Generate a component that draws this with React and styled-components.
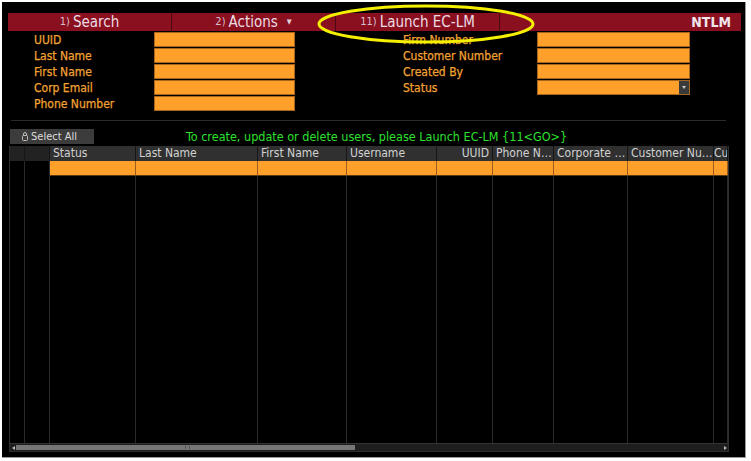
import React from 'react';
import styled, { createGlobalStyle } from 'styled-components';

const GlobalStyle = createGlobalStyle`
  html, body {
    margin: 0;
    padding: 0;
    background: #ffffff;
  }
  body {
    font-family: "DejaVu Sans Condensed", "Liberation Sans Narrow", "Liberation Sans", sans-serif;
  }
`;

const Screen = styled.div`
  position: relative;
  box-sizing: border-box;
  width: 744px;
  height: 456px;
  margin: 2px 0 0 2px;
  background: #000;
  border-right: 1px solid #9a9a9a;
  border-bottom: 1px solid #9a9a9a;
  padding: 11px 4px 0 6px;
  display: flex;
  flex-direction: column;
`;

const MenuBar = styled.div`
  display: flex;
  height: 18px;
  background: #8a1020;
`;

const Tab = styled.div`
  box-sizing: border-box;
  width: 164px;
  border-right: 1px solid #4a0810;
  display: flex;
  align-items: center;
  justify-content: center;
  gap: 3px;
  color: #ecdde4;
  font-size: 15px;
  line-height: 18px;
`;

const TabNum = styled.span`
  font-size: 11px;
  color: #d9bfcc;
`;

const Caret = styled.span`
  font-size: 7px;
  margin-left: 6px;
  color: #e5cfd8;
`;

const Code = styled.div`
  flex: 1;
  text-align: right;
  padding-right: 10px;
  color: #f0e6ec;
  font-size: 14px;
  font-weight: bold;
  line-height: 18px;
`;

const Highlight = styled.svg`
  position: absolute;
  left: 313px;
  top: 1px;
  pointer-events: none;
`;

const Form = styled.div`
  display: flex;
  padding: 1px 0 0 26px;
  height: 88px;
`;

const FieldGroup = styled.div`
  display: grid;
  grid-template-columns: ${p => p.$labelWidth}px ${p => p.$inputWidth}px;
  grid-auto-rows: 16px;
  margin-right: ${p => p.$gap || 0}px;
`;

const Label = styled.div`
  color: #f2a233;
  font-size: 12px;
  line-height: 15px;
  padding-top: 1px;
  -webkit-text-stroke: 0.25px #f2a233;
`;

const Input = styled.div`
  position: relative;
  box-sizing: border-box;
  height: 15px;
  background: #ffa02a;
  border: 1px solid #a8661c;
`;

const DropButton = styled.div`
  position: absolute;
  right: 0;
  top: 0;
  bottom: 0;
  width: 10px;
  background: #3a3a3a;
  display: flex;
  align-items: center;
  justify-content: center;
  &::after {
    content: '';
    border-left: 2px solid transparent;
    border-right: 2px solid transparent;
    border-top: 3px solid #c8c8c8;
  }
`;

const Rule = styled.div`
  height: 1px;
  background: #2a2a2a;
  margin: 0 15px 0 3px;
`;

const Toolbar = styled.div`
  display: flex;
  align-items: center;
  height: 15px;
  margin: 8px 0 1px 2px;
`;

const SelectButton = styled.div`
  width: 84px;
  height: 15px;
  box-sizing: border-box;
  background: #3c3c3c;
  color: #dcdcdc;
  font-size: 11px;
  display: flex;
  align-items: center;
  padding-left: 12px;
  gap: 3px;
`;

const Message = styled.div`
  margin-left: 92px;
  color: #2ee02e;
  font-size: 12.5px;
  line-height: 15px;
`;

const Table = styled.div`
  box-sizing: border-box;
  width: 720px;
  height: 306px;
  margin: 1px 0 0 1px;
  border-left: 1px solid #2e2e2e;
  border-right: 1px solid #2e2e2e;
  border-bottom: 1px solid #2e2e2e;
  display: flex;
  flex-direction: column;
`;

const cols = '15px 25px 86px 122px 89px 90px 56px 61px 74px 86px 14px';

const Row = styled.div`
  display: grid;
  grid-template-columns: ${cols};
  height: ${p => p.$h}px;
  flex: ${p => (p.$fill ? 1 : 'none')};
`;

const HeadCell = styled.div`
  box-sizing: border-box;
  background: ${p => (p.$dim ? '#222' : '#303030')};
  border-right: 1px solid #161616;
  color: #d2d2d2;
  font-size: 12px;
  line-height: 15px;
  padding: 0 ${p => (p.$tight ? 0 : 3)}px;
  white-space: nowrap;
  overflow: hidden;
  text-align: ${p => (p.$right ? 'right' : 'left')};
`;

const Cell = styled.div`
  box-sizing: border-box;
  background: ${p => (p.$on ? '#ffa02a' : '#000')};
  border-right: 1px solid ${p => (p.$on ? '#9a5e1c' : '#2a2a2a')};
  border-bottom: ${p => (p.$on ? '1px solid #5a3810' : 'none')};
`;

const Scrollbar = styled.div`
  display: flex;
  align-items: center;
  height: 7px;
  background: #1e1e1e;
  border-top: 1px solid #333;
`;

const Arrow = styled.div`
  width: 6px;
  display: flex;
  justify-content: center;
  &::after {
    content: '';
    border-top: 2px solid transparent;
    border-bottom: 2px solid transparent;
    ${p => (p.$right ? 'border-left: 3px solid #bbb;' : 'border-right: 3px solid #bbb;')}
  }
`;

const Track = styled.div`
  flex: 1;
  height: 5px;
  display: flex;
`;

const Thumb = styled.div`
  height: 5px;
  background: #767676;
  position: relative;
  &::after {
    content: '';
    position: absolute;
    left: 50%;
    top: 1px;
    width: 3px;
    height: 3px;
    border-left: 1px solid #555;
    border-right: 1px solid #555;
  }
`;

const headers = [
  { t: '', dim: true },
  { t: '', dim: true },
  { t: 'Status' },
  { t: 'Last Name' },
  { t: 'First Name' },
  { t: 'Username' },
  { t: 'UUID', right: true },
  { t: 'Phone N…' },
  { t: 'Corporate …' },
  { t: 'Customer Nu…' },
  { t: 'Cu', tight: true },
];

const leftFields = ['UUID', 'Last Name', 'First Name', 'Corp Email', 'Phone Number'];
const rightFields = ['Firm Number', 'Customer Number', 'Created By', 'Status'];

const LockIcon = () => (
  <svg width="6" height="9" viewBox="0 0 6 9">
    <rect x="0.5" y="3.5" width="5" height="5" rx="1" fill="none" stroke="#bdbdbd" />
    <path d="M1.5 3.5 V2 a1.5 1.5 0 0 1 3 0 V3.5" fill="none" stroke="#bdbdbd" />
  </svg>
);

export default function App() {
  return (
    <>
      <GlobalStyle />
      <Screen>
        <MenuBar>
          <Tab><TabNum>1)</TabNum>Search</Tab>
          <Tab><TabNum>2)</TabNum>Actions<Caret>▼</Caret></Tab>
          <Tab><TabNum>11)</TabNum>Launch EC-LM</Tab>
          <Code>NTLM</Code>
        </MenuBar>

        <Form>
          <FieldGroup $labelWidth={120} $inputWidth={141} $gap={108}>
            {leftFields.map(f => (
              <React.Fragment key={f}>
                <Label>{f}</Label>
                <Input />
              </React.Fragment>
            ))}
          </FieldGroup>
          <FieldGroup $labelWidth={134} $inputWidth={153}>
            {rightFields.map(f => (
              <React.Fragment key={f}>
                <Label>{f}</Label>
                <Input>{f === 'Status' && <DropButton />}</Input>
              </React.Fragment>
            ))}
          </FieldGroup>
        </Form>

        <Rule />

        <Toolbar>
          <SelectButton><LockIcon />Select All</SelectButton>
          <Message>To create, update or delete users, please Launch EC-LM {'{'}11&lt;GO&gt;{'}'}</Message>
        </Toolbar>

        <Table>
          <Row $h={15}>
            {headers.map((h, i) => (
              <HeadCell key={i} $dim={h.dim} $right={h.right} $tight={h.tight}>{h.t}</HeadCell>
            ))}
          </Row>
          <Row $h={15}>
            {headers.map((h, i) => (
              <Cell key={i} $on={i > 1} />
            ))}
          </Row>
          <Row $fill>
            {headers.map((h, i) => (
              <Cell key={i} />
            ))}
          </Row>
          <Scrollbar>
            <Arrow />
            <Track>
              <Thumb style={{ width: '48%' }} />
            </Track>
            <Arrow $right />
          </Scrollbar>
        </Table>

        <Highlight width="222" height="42" viewBox="0 0 222 42">
          <ellipse cx="111" cy="21" rx="107" ry="18" fill="none" stroke="#f4f000" strokeWidth="3" />
        </Highlight>
      </Screen>
    </>
  );
}
